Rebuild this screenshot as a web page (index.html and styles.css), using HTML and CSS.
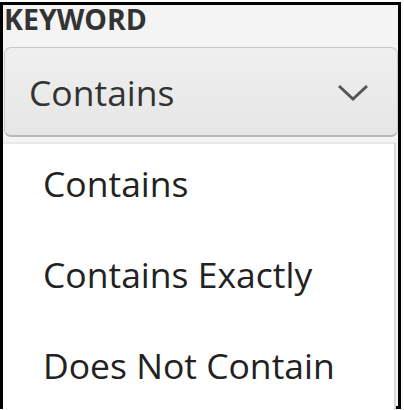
FILE: index.html
```html
<!DOCTYPE html>
<html>
<head>
<meta charset="utf-8">
<link rel="stylesheet" href="styles.css">
</head>
<body>
<div class="frame">
  <div class="label">KEYWORD</div>
  <div class="select">
    <span class="value">Contains</span>
    <svg class="chev" width="32" height="20" viewBox="0 0 32 20"><path d="M2 3 L16 16 L30 3" fill="none" stroke="#555" stroke-width="3"/></svg>
  </div>
  <ul class="menu">
    <li>Contains</li>
    <li>Contains Exactly</li>
    <li>Does Not Contain</li>
  </ul>
</div>
</body>
</html>
```
FILE: styles.css
```css
html, body { margin: 0; padding: 0; background: #fff; }
body { width: 404px; height: 410px; overflow: hidden; font-family: "Open Sans", "Noto Sans", sans-serif; }
.frame {
  margin-top: 2px;
  width: 395px;
  height: 401px;
  border: 3px solid #000;
  background: #f4f4f4;
  display: flex;
  flex-direction: column;
}
.label {
  font-weight: 700;
  font-size: 28.5px;
  line-height: 32px;
  color: #333;
  padding: 0 0 0 1px;
  margin-top: -2px;
  height: 44px;
  flex: none;
}
.select {
  flex: none;
  margin: 0 0 0 1px;
  height: 90px;
  border: 1px solid #c8c8c8;
  border-bottom: 2px solid #b8b8b8;
  border-radius: 7px;
  background: linear-gradient(#efefef, #e6e6e6);
  display: flex;
  align-items: center;
  justify-content: space-between;
  padding: 0 28px 0 24px;
  box-sizing: border-box;
}
.value { font-size: 35.5px; line-height: 36px; color: #333; }
.chev { margin-top: 2px; }
.menu {
  list-style: none;
  margin: 5px 2px 0 0;
  padding: 0;
  background: #fff;
  border-top: 2px solid #e8e8e8;
  border-right: 2px solid #d8d8d8;
  flex: 1;
}
.menu li {
  height: 91px;
  box-sizing: border-box;
  padding: 21px 0 0 40px;
  line-height: 36px;
  font-size: 35.5px;
  color: #222;
}
```
